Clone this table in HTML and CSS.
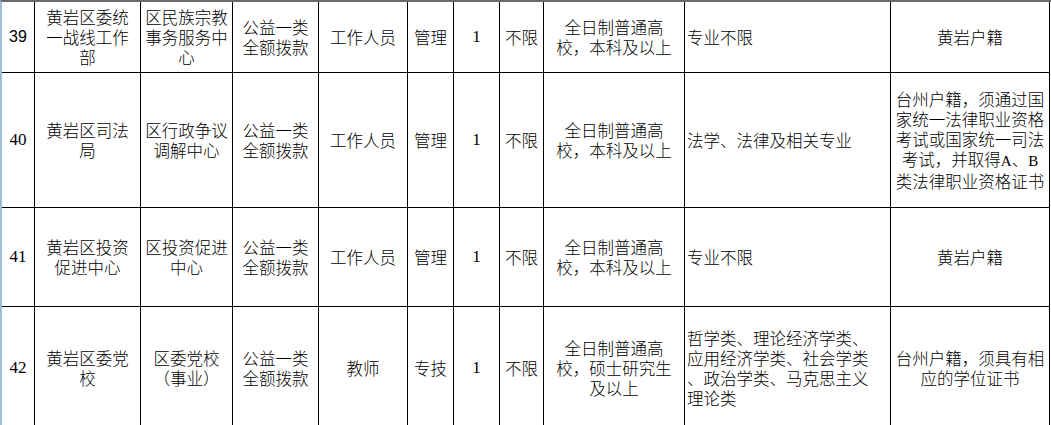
FILE: index.html
```html
<!DOCTYPE html>
<html lang="zh-CN">
<head>
<meta charset="utf-8">
<title>岗位表</title>
<link rel="stylesheet" href="styles.css">
</head>
<body>
<div class="frame">
  <div class="sheet">
    <div class="cell num sans"><div class="t">39</div></div>
    <div class="cell"><div class="t">黄岩区委统<br>一战线工作<br>部</div></div>
    <div class="cell"><div class="t">区民族宗教<br>事务服务中<br>心</div></div>
    <div class="cell"><div class="t">公益一类<br>全额拨款</div></div>
    <div class="cell"><div class="t">工作人员</div></div>
    <div class="cell"><div class="t">管理</div></div>
    <div class="cell num"><div class="t">1</div></div>
    <div class="cell"><div class="t">不限</div></div>
    <div class="cell"><div class="t">全日制普通高<br>校，本科及以上</div></div>
    <div class="cell left"><div class="t">专业不限</div></div>
    <div class="cell"><div class="t">黄岩户籍</div></div>

    <div class="cell num"><div class="t">40</div></div>
    <div class="cell"><div class="t">黄岩区司法<br>局</div></div>
    <div class="cell"><div class="t">区行政争议<br>调解中心</div></div>
    <div class="cell"><div class="t">公益一类<br>全额拨款</div></div>
    <div class="cell"><div class="t">工作人员</div></div>
    <div class="cell"><div class="t">管理</div></div>
    <div class="cell num"><div class="t">1</div></div>
    <div class="cell"><div class="t">不限</div></div>
    <div class="cell"><div class="t">全日制普通高<br>校，本科及以上</div></div>
    <div class="cell left"><div class="t">法学、法律及相关专业</div></div>
    <div class="cell"><div class="t">台州户籍，须通过国<br>家统一法律职业资格<br>考试或国家统一司法<br>考试，并取得<span class="latin">A</span>、<span class="latin">B</span><br>类法律职业资格证书</div></div>

    <div class="cell num"><div class="t">41</div></div>
    <div class="cell"><div class="t">黄岩区投资<br>促进中心</div></div>
    <div class="cell"><div class="t">区投资促进<br>中心</div></div>
    <div class="cell"><div class="t">公益一类<br>全额拨款</div></div>
    <div class="cell"><div class="t">工作人员</div></div>
    <div class="cell"><div class="t">管理</div></div>
    <div class="cell num"><div class="t">1</div></div>
    <div class="cell"><div class="t">不限</div></div>
    <div class="cell"><div class="t">全日制普通高<br>校，本科及以上</div></div>
    <div class="cell left"><div class="t">专业不限</div></div>
    <div class="cell"><div class="t">黄岩户籍</div></div>

    <div class="cell num"><div class="t">42</div></div>
    <div class="cell"><div class="t">黄岩区委党<br>校</div></div>
    <div class="cell"><div class="t">区委党校<br>（事业）</div></div>
    <div class="cell"><div class="t">公益一类<br>全额拨款</div></div>
    <div class="cell"><div class="t">教师</div></div>
    <div class="cell"><div class="t">专技</div></div>
    <div class="cell num"><div class="t">1</div></div>
    <div class="cell"><div class="t">不限</div></div>
    <div class="cell"><div class="t">全日制普通高<br>校，硕士研究生<br>及以上</div></div>
    <div class="cell left"><div class="t">哲学类、理论经济学类、<br>应用经济学类、社会学类<br>、政治学类、马克思主义<br>理论类</div></div>
    <div class="cell"><div class="t">台州户籍，须具有相<br>应的学位证书</div></div>
  </div>
</div>
</body>
</html>
```

FILE: styles.css
```css
html, body {
  margin: 0;
  padding: 0;
  background: #ffffff;
  overflow: hidden;
}

body {
  width: 1051px;
  height: 425px;
  font-family: "Noto Sans CJK SC", "Noto Sans", sans-serif;
  font-weight: 300;
  color: #000000;
}

.frame {
  border-top: 2px solid #6b6b6b;
  border-left: 2px solid #9fbbdc;
  width: 1049px;
}

.sheet {
  display: grid;
  grid-template-columns: 33px 106px 92px 86px 89px 46px 46px 44px 141px 206px 159px;
  grid-template-rows: 71px 135px 99px 122px;
}

.cell {
  box-sizing: border-box;
  border-right: 1px solid #000000;
  border-bottom: 1px solid #000000;
  display: flex;
  align-items: center;
  justify-content: center;
  text-align: center;
  white-space: nowrap;
  font-size: 16.5px;
  line-height: 20px;
  overflow: hidden;
}

.t {
  display: block;
}

.left {
  justify-content: flex-start;
  text-align: left;
  padding-left: 2px;
}

.num {
  font-family: "Liberation Serif", "DejaVu Serif", serif;
  font-weight: 400;
  font-size: 17px;
}

.sans {
  font-family: "Liberation Sans", "DejaVu Sans", sans-serif;
  font-size: 16px;
}

.latin {
  font-family: "Liberation Serif", serif;
  font-weight: 400;
  font-size: 15px;
}
```
